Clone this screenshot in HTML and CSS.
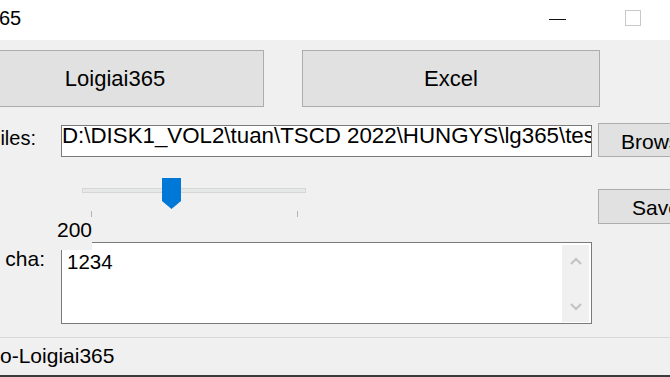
FILE: index.html
```html
<!DOCTYPE html>
<html>
<head>
<meta charset="utf-8">
<link rel="stylesheet" href="styles.css">
</head>
<body>
<div class="window">
  <div class="titlebar">
    <div class="title">65</div>
    <div class="winctl">
      <div class="wbtn"><span class="min-line"></span></div>
      <div class="wbtn"><span class="max-box"></span></div>
      <div class="wbtn"></div>
    </div>
  </div>
  <div class="main">
    <div class="btnrow">
      <div class="btn big">Loigiai365</div>
      <div class="btn big">Excel</div>
    </div>
    <div class="filerow">
      <div class="lbl lbl-files">iles:</div>
      <div class="textbox"><span class="tbtext">D:\DISK1_VOL2\tuan\TSCD 2022\HUNGYS\lg365\test.xlsx</span></div>
      <div class="btn side browse">Browse</div>
    </div>
    <div class="sliderrow">
      <div class="slider">
        <div class="track"></div>
        <svg class="thumb" width="19" height="31" viewBox="0 0 19 31"><polygon points="0,0 19,0 19,23 9.5,31 0,23" fill="#0078d7"/></svg>
        <div class="ticks"><span class="tick"></span><span class="tick"></span></div>
      </div>
      <div class="btn side save">Save</div>
    </div>
    <div class="value">200</div>
    <div class="arearow">
      <div class="lbl lbl-cha">cha:</div>
      <div class="textarea">
        <div class="tacontent">1234</div>
        <div class="scroll">
          <svg width="12" height="8" viewBox="0 0 12 8"><polyline points="1,7 6,2 11,7" fill="none" stroke="#c2c2c2" stroke-width="2"/></svg>
          <svg width="12" height="8" viewBox="0 0 12 8"><polyline points="1,1 6,6 11,1" fill="none" stroke="#c2c2c2" stroke-width="2"/></svg>
        </div>
      </div>
    </div>
  </div>
  <div class="status">o-Loigiai365</div>
</div>
</body>
</html>
```

FILE: styles.css
```css
html, body {
  margin: 0;
  padding: 0;
}
body {
  width: 670px;
  height: 377px;
  overflow: hidden;
  background: #f0f0f0;
  font-family: "Liberation Sans", Arial, sans-serif;
  color: #000;
}
.window {
  width: 670px;
  height: 377px;
  display: flex;
  flex-direction: column;
  overflow: hidden;
}
.titlebar {
  height: 40px;
  flex: none;
  background: #fff;
  display: flex;
}
.title {
  font-size: 20px;
  line-height: 20px;
  padding-top: 8px;
  margin-left: -1px;
}
.winctl {
  margin-left: auto;
  margin-right: -75px;
  display: flex;
}
.wbtn {
  width: 75px;
  height: 40px;
  display: flex;
  justify-content: center;
  align-items: flex-start;
}
.min-line {
  width: 17px;
  height: 1px;
  background: #111;
  margin-top: 19px;
}
.max-box {
  width: 14px;
  height: 14px;
  border: 1.5px solid #c9c9c9;
  margin-top: 10px;
}
.main {
  height: 297px;
  flex: none;
  padding-top: 10px;
  box-sizing: border-box;
  overflow: hidden;
}
.btn {
  box-sizing: border-box;
  border: 1px solid #adadad;
  background: #e1e1e1;
  display: flex;
  justify-content: center;
  align-items: center;
  flex: none;
  overflow: hidden;
  white-space: nowrap;
}
.btnrow {
  display: flex;
  gap: 38px;
  margin-left: -34px;
  height: 57px;
}
.btn.big {
  width: 298px;
  height: 57px;
  font-size: 22px;
}
.filerow {
  display: flex;
  align-items: flex-start;
  margin-top: 16px;
  height: 34px;
}
.lbl {
  width: 61px;
  flex: none;
  box-sizing: border-box;
  text-align: right;
  font-size: 21px;
  line-height: 24px;
}
.lbl-files {
  padding-right: 25px;
  padding-top: 3px;
  font-size: 20px;
}
.textbox {
  width: 531px;
  height: 32px;
  margin-top: 2px;
  box-sizing: border-box;
  border: 1px solid #7a7a7a;
  background: #fff;
  font-size: 22.3px;
  line-height: 20px;
  white-space: nowrap;
  overflow: hidden;
  text-overflow: clip;
  flex: none;
}
.btn.side {
  width: 116px;
  font-size: 21px;
  margin-left: 6px;
}
.browse {
  height: 34px;
  padding-top: 3px;
}
.sliderrow {
  display: flex;
  align-items: flex-start;
  margin-top: 21px;
  padding-left: 82px;
}
.slider {
  position: relative;
  width: 224px;
  height: 40px;
  flex: none;
}
.track {
  margin-top: 10px;
  height: 5px;
  box-sizing: border-box;
  border: 1px solid #d6d6d6;
  background: #e6e8e8;
}
.thumb {
  position: absolute;
  left: 80px;
  top: 0;
}
.ticks {
  margin-top: 18px;
  padding: 0 8px 0 9px;
  display: flex;
  justify-content: space-between;
}
.tick {
  width: 1px;
  height: 6px;
  background: #b4b4b4;
}
.btn.save {
  margin-left: 292px;
  margin-top: 11px;
  margin-bottom: -6px;
  height: 35px;
  padding-top: 2px;
}
.value {
  position: relative;
  z-index: 1;
  width: max-content;
  margin-left: 57px;
  padding-bottom: 8px;
  margin-bottom: -8px;
  background: #f0f0f0;
  font-size: 21px;
  line-height: 24px;
}
.arearow {
  display: flex;
  align-items: flex-start;
}
.lbl-cha {
  padding-right: 16px;
  padding-top: 5px;
}
.textarea {
  width: 531px;
  height: 82px;
  box-sizing: border-box;
  border: 1px solid #7a7a7a;
  background: #fff;
  display: flex;
  flex: none;
}
.tacontent {
  flex: 1;
  padding: 7px 0 0 5px;
  font-size: 20.5px;
  line-height: 23px;
}
.scroll {
  width: 27px;
  margin: 2px 2px 1px 0;
  background: #f0f0f0;
  display: flex;
  flex-direction: column;
  justify-content: space-between;
  align-items: center;
  padding: 12px 0 11px;
  box-sizing: border-box;
}
.scroll svg {
  display: block;
}
.status {
  flex: none;
  height: 40px;
  box-sizing: border-box;
  border-top: 1px solid #d9d9d9;
  border-bottom: 2px solid #3c3c3c;
  padding-top: 6px;
  font-size: 21px;
  line-height: 24px;
}
```
